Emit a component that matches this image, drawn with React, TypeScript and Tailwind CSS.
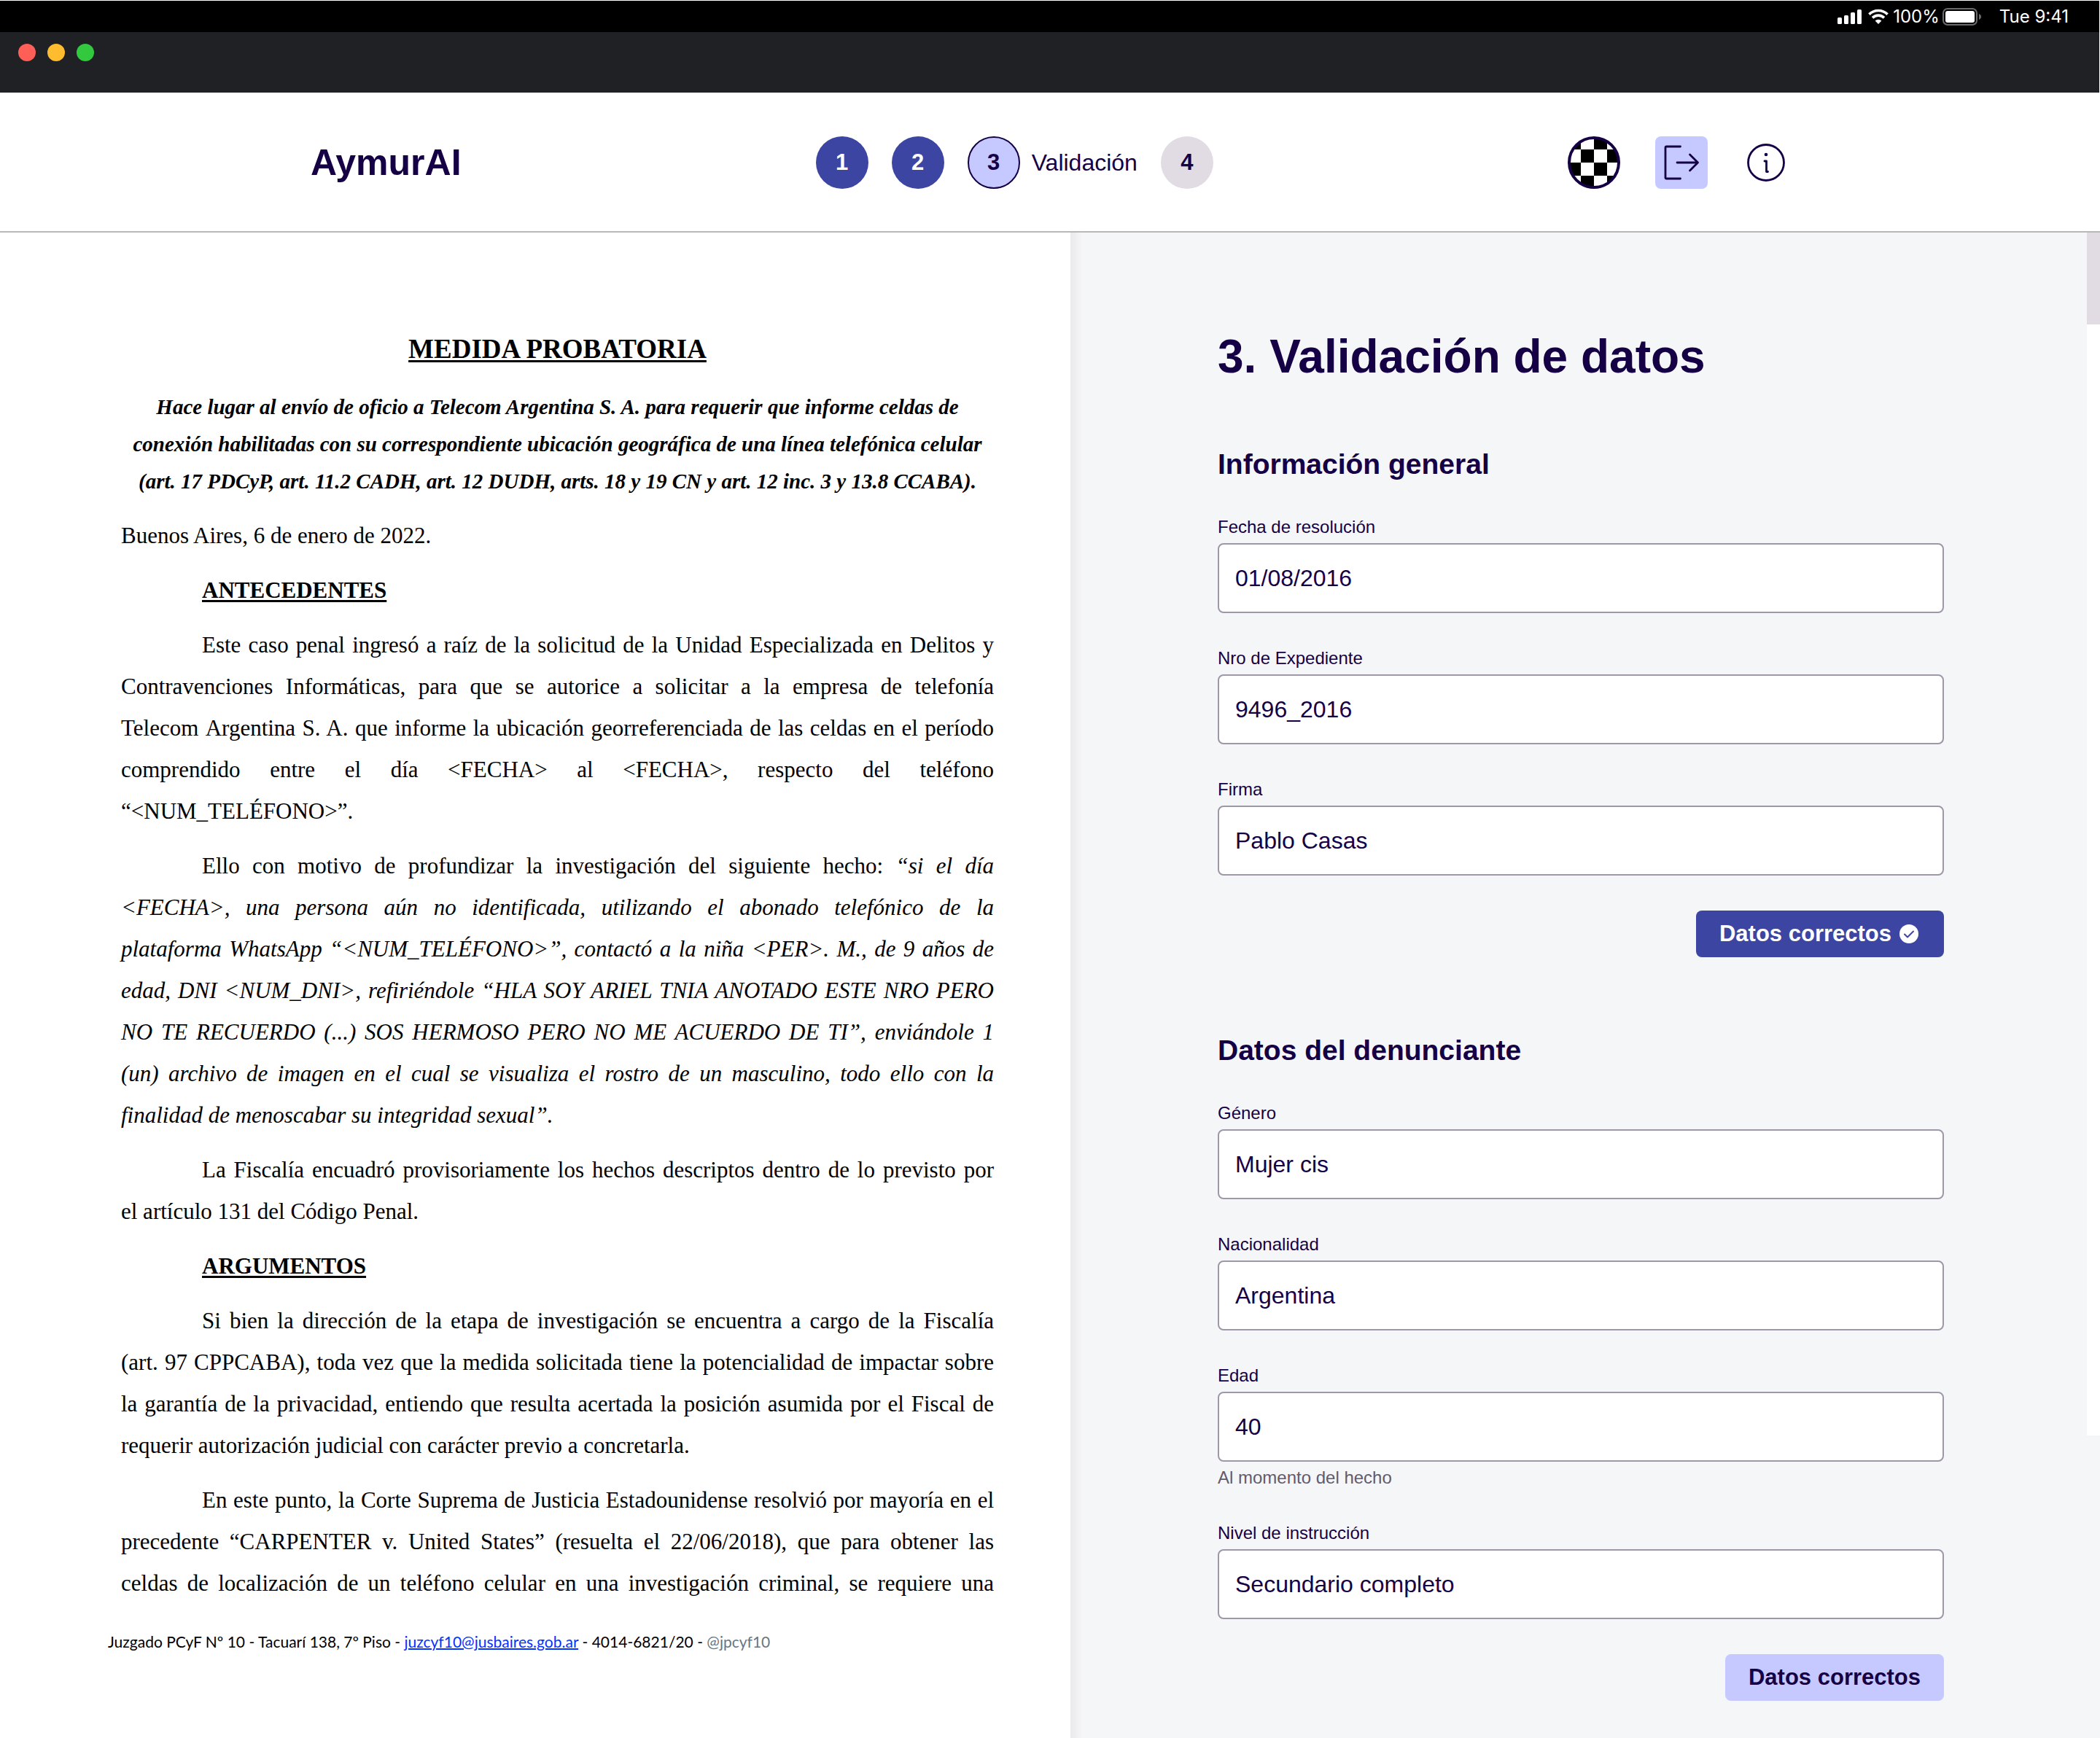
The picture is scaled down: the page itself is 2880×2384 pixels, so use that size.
import React, { useId } from "react";

function SignalIcon() {
  return (
    <svg width="34" height="22" viewBox="0 0 34 22" fill="#fff" aria-hidden="true">
      <rect x="0" y="12" width="6" height="9" rx="1.5" />
      <rect x="9" y="9" width="6" height="12" rx="1.5" />
      <rect x="18" y="5" width="6" height="16" rx="1.5" />
      <rect x="27" y="1" width="6" height="20" rx="1.5" />
    </svg>
  );
}

function WifiIcon() {
  return (
    <svg width="28" height="22" viewBox="0 0 28 22" fill="none" stroke="#fff" strokeWidth="3.6" aria-hidden="true">
      <path d="M1.4 7.6a18 18 0 0 1 25.2 0" />
      <path d="M6 12.4a11.4 11.4 0 0 1 16 0" />
      <path d="M14 21l-4.4-4.4a6.3 6.3 0 0 1 8.8 0z" fill="#fff" stroke="none" />
    </svg>
  );
}

function BatteryIcon() {
  return (
    <svg width="54" height="24" viewBox="0 0 54 24" fill="none" aria-hidden="true">
      <rect x="1" y="1" width="46" height="22" rx="6" stroke="#6b6b6b" strokeWidth="2" />
      <rect x="4" y="4" width="40" height="16" rx="3" fill="#fff" />
      <path d="M50 8c2 .8 3 2.200 3 4s-1 3.200-3 4z" fill="#6b6b6b" />
    </svg>
  );
}

function CheckerAvatar() {
  const clip = useId();
  return (
    <svg className="size-[72px]" viewBox="0 0 72 72" aria-hidden="true">
      <clipPath id={clip}>
        <circle cx="36" cy="36" r="35" />
      </clipPath>
      <g clipPath={`url(#${clip})`}>
        <rect width="72" height="72" fill="#fff" />
        <path
          d="M0 0h18v18H0zM36 0h18v18H36zM18 18h18v18H18zM54 18h18v18H54zM0 36h18v18H0zM36 36h18v18H36zM18 54h18v18H18zM54 54h18v18H54z"
          fill="#000"
        />
      </g>
      <circle cx="36" cy="36" r="34" fill="none" stroke="#150045" strokeWidth="4" />
    </svg>
  );
}

function ExitIcon() {
  return (
    <svg
      className="size-[72px]"
      viewBox="0 0 72 72"
      fill="none"
      stroke="#150045"
      strokeWidth="2.8"
      strokeLinecap="round"
      strokeLinejoin="round"
      aria-hidden="true"
    >
      <path d="M34.500 14H15.500a1.500 1.500 0 0 0-1.500 1.500v41a1.500 1.500 0 0 0 1.500 1.500h19" />
      <path d="M30 36h28.500M47.500 25l11 11-11 11" />
    </svg>
  );
}

function InfoIcon() {
  return (
    <svg
      className="size-16"
      viewBox="0 0 64 64"
      fill="none"
      stroke="#150045"
      strokeWidth="2.800"
      strokeLinecap="round"
      strokeLinejoin="round"
      aria-hidden="true"
    >
      <circle cx="32" cy="32" r="24.500" />
      <path d="M30 30h2.500v14.500h2" />
      <circle cx="32" cy="21" r="2.300" fill="#150045" stroke="none" />
    </svg>
  );
}

function CheckBadge() {
  return (
    <svg className="size-8" viewBox="0 0 32 32" aria-hidden="true">
      <circle cx="16" cy="16" r="13" fill="#fff" />
      <path d="M10 16.500l4 4 8-8" fill="none" stroke="#3d45a2" strokeWidth="2" strokeLinecap="round" strokeLinejoin="round" />
    </svg>
  );
}

const stepBase = "flex size-[72px] items-center justify-center rounded-full text-[31px] font-bold";

function Steps() {
  return (
    <ol className="flex items-center gap-8">
      <li className={`${stepBase} bg-[#3d45a2] text-white`}>1</li>
      <li className={`${stepBase} bg-[#3d45a2] text-white`}>2</li>
      <li className="flex items-center gap-4" aria-current="step">
        <span className={`${stepBase} border-2 border-[#150045] bg-[#c5c9ff]`}>3</span>
        <span className="text-[32px]">Validación</span>
      </li>
      <li className={`${stepBase} bg-[#e1dce3]`}>4</li>
    </ol>
  );
}

function Field({ label, value, hint }: { label: string; value: string; hint?: string }) {
  const id = useId();
  return (
    <div className="flex flex-col gap-2">
      <label htmlFor={id} className="text-[24px] leading-[28px]">
        {label}
      </label>
      <input
        id={id}
        type="text"
        defaultValue={value}
        className="h-24 w-full rounded-lg border-2 border-[#9e97a8] bg-white px-[22px] text-[32px] outline-none"
      />
      {hint && <p className="text-[24px] leading-[28px] text-[#625b6d]">{hint}</p>}
    </div>
  );
}

function Section({ title, children }: { title: string; children: React.ReactNode }) {
  return (
    <section className="flex flex-col gap-12">
      <h2 className="text-[39px] leading-[48px] font-bold">{title}</h2>
      {children}
    </section>
  );
}

const buttonBase = "flex h-16 items-center gap-2 self-end rounded-lg px-8 text-[31px] font-bold";

function DocumentView() {
  return (
    <article className="bg-white pt-[134px] font-['Liberation_Serif',serif] text-black">
      <div className="pr-[105px] pl-[166px]">
        <h2 className="text-center text-[37px] leading-[51px] font-bold underline decoration-[3px] underline-offset-[3px]">
          MEDIDA PROBATORIA
        </h2>
        <p className="mt-[29px] text-center text-[29px] leading-[51px] font-bold italic">
          Hace lugar al envío de oficio a Telecom Argentina S. A. para requerir que informe celdas de
          <br />
          conexión habilitadas con su correspondiente ubicación geográfica de una línea telefónica celular
          <br />
          (art. 17 PDCyP, art. 11.2 CADH, art. 12 DUDH, arts. 18 y 19 CN y art. 12 inc. 3 y 13.8 CCABA).
        </p>
        <div className="mt-5 flex flex-col gap-[18px] text-justify text-[31px] leading-[57px]">
          <p>Buenos Aires, 6 de enero de 2022.</p>
          <h3 className="pl-[111px] font-bold underline decoration-[3px] underline-offset-[3px]">ANTECEDENTES</h3>
          <p className="indent-[111px]">
            Este caso penal ingresó a raíz de la solicitud de la Unidad Especializada en Delitos y Contravenciones
            Informáticas, para que se autorice a solicitar a la empresa de telefonía Telecom&nbsp;Argentina S. A. que
            informe la ubicación georreferenciada de las celdas en el período comprendido entre el día &lt;FECHA&gt; al
            &lt;FECHA&gt;, respecto del teléfono “&lt;NUM_TELÉFONO&gt;”.
          </p>
          <p className="indent-[111px]">
            Ello con motivo de profundizar la investigación del siguiente hecho:{" "}
            <em>
              “si el día &lt;FECHA&gt;, una persona aún no identificada, utilizando el abonado telefónico de la
              plataforma&nbsp;WhatsApp “&lt;NUM_TELÉFONO&gt;”, contactó a la niña &lt;PER&gt;. M., de 9 años de
              edad,&nbsp;DNI&nbsp;&lt;NUM_DNI&gt;, refiriéndole “HLA SOY ARIEL TNIA ANOTADO ESTE NRO PERO
              NO&nbsp;TE&nbsp;RECUERDO (...) SOS HERMOSO PERO NO ME ACUERDO DE TI”, enviándole 1 (un)&nbsp;archivo de
              imagen en el cual se visualiza el rostro de un masculino, todo ello con la
              finalidad&nbsp;de&nbsp;menoscabar su integridad sexual”.
            </em>
          </p>
          <p className="indent-[111px]">
            La Fiscalía encuadró provisoriamente los hechos descriptos dentro de lo previsto por el&nbsp;artículo 131
            del Código Penal.
          </p>
          <h3 className="pl-[111px] font-bold underline decoration-[3px] underline-offset-[3px]">ARGUMENTOS</h3>
          <p className="indent-[111px]">
            Si bien la dirección de la etapa de investigación se encuentra a cargo de la Fiscalía
            (art.&nbsp;97&nbsp;CPPCABA), toda vez que la medida solicitada tiene la potencialidad de impactar sobre
            la&nbsp;garantía de la privacidad, entiendo que resulta acertada la posición asumida por el Fiscal de
            requerir autorización judicial con carácter previo a concretarla.
          </p>
          <p className="indent-[111px] [text-align-last:justify]">
            En este punto, la Corte Suprema de Justicia Estadounidense resolvió por mayoría en el precedente “CARPENTER
            v. United States” (resuelta el 22/06/2018), que para obtener las celdas de localización de un teléfono
            celular en una investigación criminal, se requiere una
          </p>
        </div>
      </div>
      <footer className="mt-9 pl-[148px] font-['Lato',sans-serif] text-[21px] leading-[32px]">
        Juzgado PCyF Nº 10 - Tacuarí 138, 7º Piso -{" "}
        <a href="mailto:juzcyf10@jusbaires.gob.ar" className="text-[#0432ff] underline decoration-2">
          juzcyf10@jusbaires.gob.ar
        </a>{" "}
        - 4014-6821/20 - <span className="text-[#657786]">@jpcyf10</span>
      </footer>
    </article>
  );
}

export default function App() {
  return (
    <div className="flex min-h-screen flex-col bg-white font-['Liberation_Sans',Arial,sans-serif] text-[#150045]">
      <div className="pt-px pr-px">
        <div className="flex h-[43px] items-center justify-end bg-black pr-[42px] font-['Inter',sans-serif] text-[24px] text-white">
          <div className="flex items-center">
            <SignalIcon />
            <span className="ml-2 flex">
              <WifiIcon />
            </span>
            <span className="ml-1.5">100%</span>
            <span className="ml-1 flex">
              <BatteryIcon />
            </span>
          </div>
          <time className="ml-6">Tue 9:41</time>
        </div>
        <div className="flex h-[83px] items-start gap-4 bg-[#202124] pt-4 pl-[25px]">
          <button type="button" aria-label="Cerrar" className="size-6 rounded-full bg-[#ff5f57]" />
          <button type="button" aria-label="Minimizar" className="size-6 rounded-full bg-[#febc2e]" />
          <button type="button" aria-label="Maximizar" className="size-6 rounded-full bg-[#33c93f]" />
        </div>
      </div>

      <header className="flex h-48 items-center justify-between border-b-2 border-[#b8b8b8] bg-white px-[426px] pt-0.5">
        <a href="#inicio" className="text-[50px] font-bold">
          AymurAI
        </a>
        <Steps />
        <div className="flex items-center gap-12">
          <button type="button" aria-label="Perfil">
            <CheckerAvatar />
          </button>
          <button type="button" aria-label="Salir" className="rounded-lg bg-[#c5c9ff]">
            <ExitIcon />
          </button>
          <button type="button" aria-label="Información">
            <InfoIcon />
          </button>
        </div>
      </header>

      <main className="grid flex-1 grid-cols-[1468fr_1412fr]">
        <DocumentView />

        <div className="relative bg-[#f5f6f8] bg-[linear-gradient(to_right,#e9e9ec,#f5f6f8_16px)] pt-[130px] pr-[214px] pb-[51px] pl-[202px]">
          <h1 className="text-[64px] leading-[80px] font-bold">3. Validación de datos</h1>
          <form className="mt-[84px] flex flex-col gap-[104px]">
            <Section title="Información general">
              <Field label="Fecha de resolución" value="01/08/2016" />
              <Field label="Nro de Expediente" value="9496_2016" />
              <Field label="Firma" value="Pablo Casas" />
              <button type="button" className={`${buttonBase} bg-[#3d45a2] text-white`}>
                Datos correctos
                <CheckBadge />
              </button>
            </Section>
            <Section title="Datos del denunciante">
              <Field label="Género" value="Mujer cis" />
              <Field label="Nacionalidad" value="Argentina" />
              <Field label="Edad" value="40" hint="Al momento del hecho" />
              <Field label="Nivel de instrucción" value="Secundario completo" />
              <button type="button" className={`${buttonBase} bg-[#c5c9ff]`}>
                Datos correctos
              </button>
            </Section>
          </form>
          <div className="absolute top-0 right-0 h-[1650px] w-[18px] bg-white" aria-hidden="true">
            <div className="h-[126px] bg-[#e1dce3]" />
          </div>
        </div>
      </main>
    </div>
  );
}
